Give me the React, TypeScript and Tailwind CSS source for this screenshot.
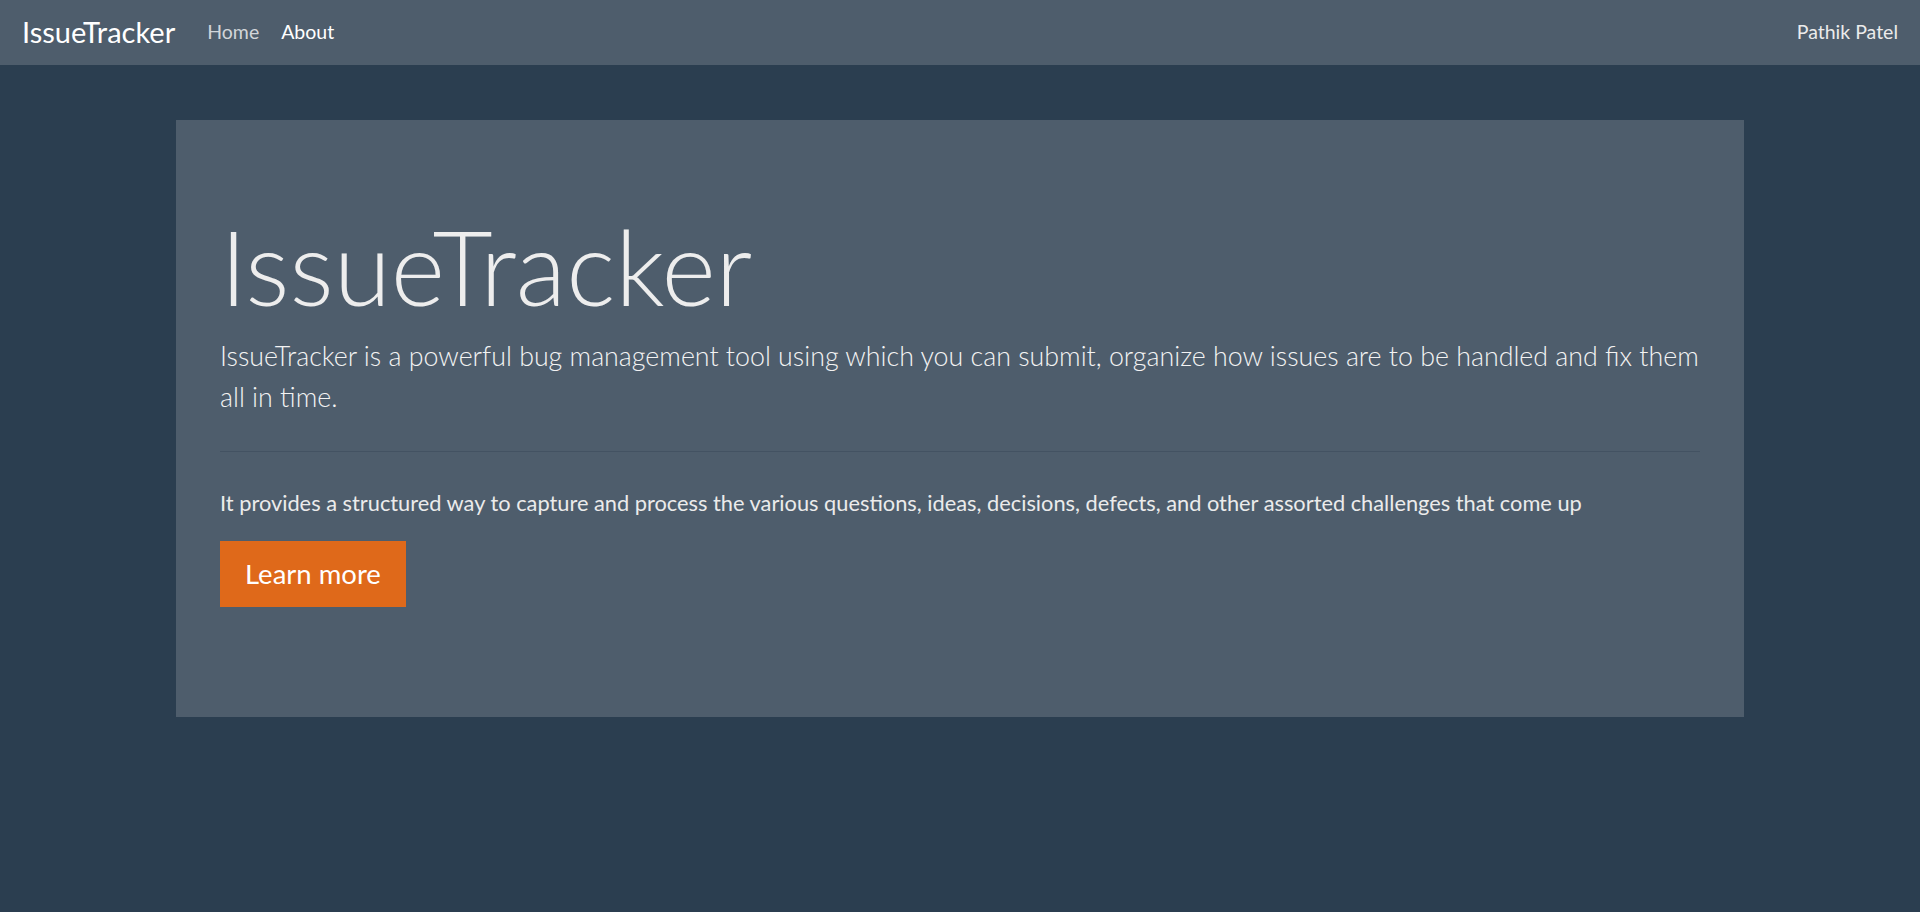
export default function App() {
  return (
    <div className="min-h-screen bg-[#2b3e50] font-['Lato','Noto_Sans',sans-serif] text-[#ebebeb]">
      {/* Navbar */}
      <nav className="flex h-[65px] items-center bg-[#4e5d6c] px-[22px] pb-[2px]">
        <a href="#" className="mr-[21px] text-[29px] leading-[42px] text-white">
          IssueTracker
        </a>
        <ul className="flex items-center">
          <li>
            <a href="#" className="block px-[11px] text-[19.5px] leading-[30px] text-white/75">
              Home
            </a>
          </li>
          <li>
            <a href="#" className="block px-[11px] text-[19.5px] leading-[30px] text-white">
              About
            </a>
          </li>
        </ul>
        <span className="ml-auto text-[19.5px] leading-[30px] text-[#ebebeb]">Pathik Patel</span>
      </nav>

      {/* Jumbotron */}
      <div className="mx-auto mt-[55px] w-[1568px] bg-[#4e5d6c] px-[44px] pt-[86px] pb-[88px]">
        <h1 className="text-[104px] font-light leading-[1.155] text-[#ededed]">IssueTracker</h1>
        <p className="mt-[10px] text-[26.8px] font-light leading-[41px] text-[#f3f3f3]">
          IssueTracker is a powerful bug management tool using which you can submit, organize how issues are to be
          handled and fix them all in time.
        </p>
        <hr className="mt-[33px] mb-[34px] border-t border-[#435262]" />
        <p className="text-[21.8px] leading-[33px]">
          It provides a structured way to capture and process the various questions, ideas, decisions, defects, and
          other assorted challenges that come up
        </p>
        <div className="mt-[22px] pb-[22px]">
          <a
            href="#"
            className="inline-block border border-[#df691a] bg-[#df691a] px-[24px] py-[11px] text-[27.5px] leading-[42px] text-white"
          >
            Learn more
          </a>
        </div>
      </div>
    </div>
  );
}
